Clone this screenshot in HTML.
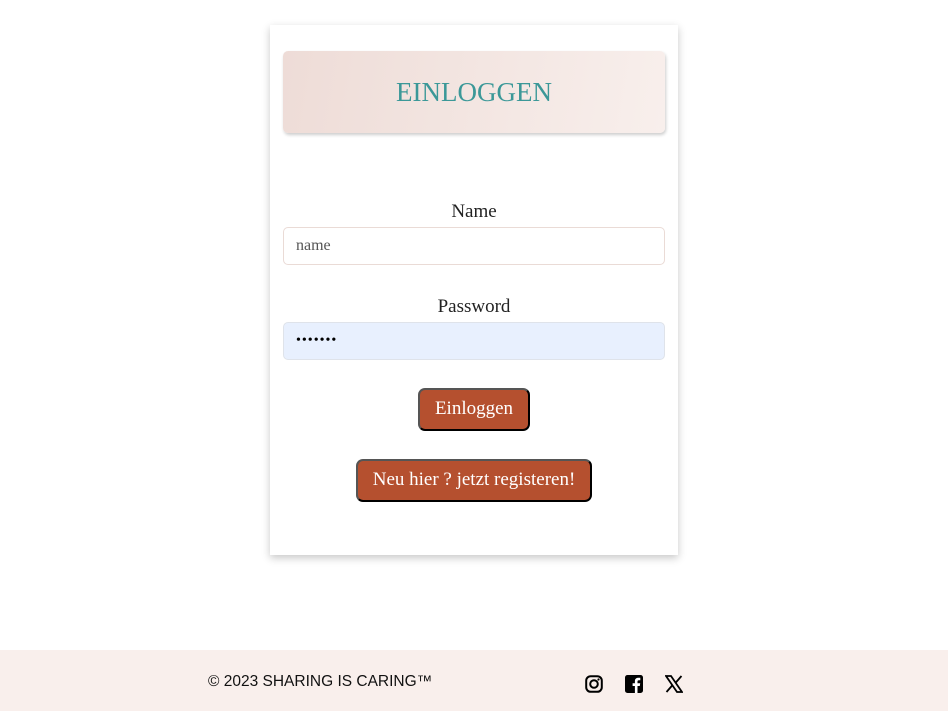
<!DOCTYPE html>
<html><head><style>
body{margin:0;width:948px;height:711px;background:#fff;font-family:"Liberation Serif",serif;position:relative;overflow:hidden}
.card{position:absolute;left:270px;top:25px;width:408px;height:530px;background:#fff;box-shadow:0 3px 8px rgba(0,0,0,.22)}
.hd{position:absolute;left:13px;top:26px;width:382px;height:82px;border-radius:5px;background:linear-gradient(100deg,#eedcd7,#f8efec);box-shadow:1px 2px 3px rgba(0,0,0,.2);text-align:center;line-height:82px;color:#3b9898;font-size:27px}
.lbl{position:absolute;left:0;width:408px;text-align:center;font-size:19px;color:#222}
.inp{position:absolute;left:13px;height:38px;border:1px solid #eadbd6;border-radius:5px;box-sizing:border-box;width:382px;font-size:16px;color:#555;padding-left:12px;line-height:36px}
.btn{position:absolute;height:43px;box-sizing:border-box;background:#b5502f;color:#fff;font-size:19px;border:2px outset #555;border-radius:7px;text-align:center;line-height:38px}
.ft{position:absolute;left:0;top:650px;width:948px;height:61px;background:#f9efec}
</style></head><body>
<div class="card">
<div class="hd">EINLOGGEN</div>
<div class="lbl" style="top:176px">Name</div>
<div class="inp" style="top:202px">name</div>
<div class="lbl" style="top:271px">Password</div>
<div class="inp" style="top:297px;background:#e8f0fe;border-color:#dfe3ea;color:#000;font-size:14px;letter-spacing:1px">•••••••</div>
<div class="btn" style="left:148px;top:363px;width:112px">Einloggen</div>
<div class="btn" style="left:86px;top:434px;width:236px">Neu hier ? jetzt registeren!</div>
</div>
<div class="ft">
<div style="position:absolute;left:208px;top:23px;font-family:'Liberation Sans',sans-serif;font-size:15.5px;color:#111">© 2023 SHARING IS CARING™</div>
<svg style="position:absolute;left:585px;top:25px" width="18" height="18" viewBox="0 0 18 18"><rect x="1.2" y="1.2" width="15.6" height="15.6" rx="4.5" fill="none" stroke="#000" stroke-width="2"/><circle cx="9" cy="9" r="3.8" fill="none" stroke="#000" stroke-width="2"/><circle cx="13.5" cy="4.5" r="1.1"/></svg>
<svg style="position:absolute;left:625px;top:25px" width="18" height="18" viewBox="0 0 18 18"><rect width="18" height="18" rx="2.5"/><path d="M12.5 18V11h2.3l.4-2.8h-2.7V6.6c0-.8.3-1.3 1.4-1.3h1.4V2.8c-.3 0-1.1-.1-2-.1-2.1 0-3.4 1.2-3.4 3.5v2H7.6V11h2.3v7z" fill="#fff"/></svg>
<svg style="position:absolute;left:665px;top:25px" width="18" height="18" viewBox="0 0 18 18"><path d="M1 1h5l11 16h-5z" fill="none" stroke="#000" stroke-width="1.8"/><path d="M16.5 1L10.4 8M1.5 17l6.1-7" stroke="#000" stroke-width="1.8"/></svg>
</div>
</body></html>
